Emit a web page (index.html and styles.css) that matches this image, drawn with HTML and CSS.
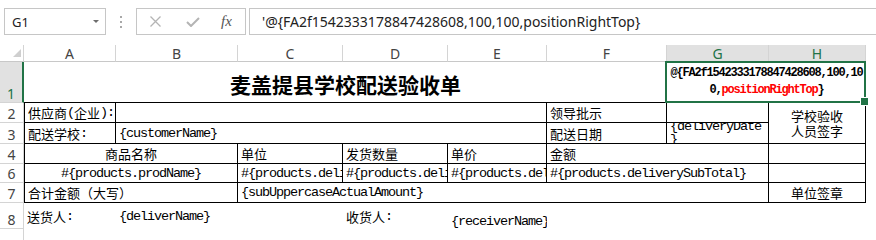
FILE: index.html
```html
<!DOCTYPE html>
<html lang="zh-CN">
<head>
    <meta charset="UTF-8">
    <title>麦盖提县学校配送验收单</title>
    <link rel="stylesheet" href="styles.css">
</head>
<body>
    <div class="app">
        <!-- barra de fórmulas -->
        <div class="formula-bar">
            <div class="name-box"><span>G1</span><span class="caret"></span></div>
            <div class="grip"><i></i><i></i><i></i></div>
            <div class="fx-buttons">
                <svg class="btn-x" width="11" height="11" viewBox="0 0 11 11"><path d="M0.5 0.5 L10.5 10.5 M10.5 0.5 L0.5 10.5" stroke="#b4b4b4" stroke-width="1.3" fill="none"/></svg>
                <svg class="btn-ok" width="14" height="10" viewBox="0 0 14 10"><path d="M1 5 L5 9 L13 1" stroke="#b4b4b4" stroke-width="2" fill="none"/></svg>
                <span class="btn-fx">fx</span>
            </div>
            <div class="formula-input">'@{FA2f1542333178847428608,100,100,positionRightTop}</div>
        </div>

        <!-- hoja -->
        <div class="sheet">
            <div class="corner"><span class="corner-mark"></span></div>
            <div class="col-head">A</div>
            <div class="col-head">B</div>
            <div class="col-head">C</div>
            <div class="col-head">D</div>
            <div class="col-head">E</div>
            <div class="col-head">F</div>
            <div class="col-head sel">G</div>
            <div class="col-head sel">H</div>

            <div class="row-head sel">1</div>
            <div class="cell c6 bb title">麦盖提县学校配送验收单</div>
            <div class="cell c2 bb center active">
                <div class="code-bold">@{FA2f1542333178847428608,100,10<br>0,<span class="red">positionRightTop</span>}</div>
            </div>

            <div class="row-head">2</div>
            <div class="cell b bl">供应商<span class="m">(</span>企业<span class="m">):</span></div>
            <div class="cell c4 b"></div>
            <div class="cell b">领导批示</div>
            <div class="cell b"></div>
            <div class="cell r2 b center stack">学校验收<br>人员签字</div>

            <div class="row-head">3</div>
            <div class="cell b bl">配送学校<span class="m">:</span></div>
            <div class="cell c4 b"><span class="m">{customerName}</span></div>
            <div class="cell b">配送日期</div>
            <div class="cell b top"><div class="wrap m">{deliveryDate<br>}</div></div>

            <div class="row-head">4</div>
            <div class="cell c2 b bl center">商品名称</div>
            <div class="cell b">单位</div>
            <div class="cell b">发货数量</div>
            <div class="cell b">单价</div>
            <div class="cell c2 b">金额</div>
            <div class="cell b"></div>

            <div class="row-head">6</div>
            <div class="cell c2 b bl center"><span class="m">#{products.prodName}</span></div>
            <div class="cell b"><span class="m clip">#{products.deliveryNum}</span></div>
            <div class="cell b"><span class="m clip">#{products.deliveryCount}</span></div>
            <div class="cell b"><span class="m clip">#{products.deliveryPrice}</span></div>
            <div class="cell c2 b"><span class="m">#{products.deliverySubTotal}</span></div>
            <div class="cell b"></div>

            <div class="row-head">7</div>
            <div class="cell c2 b bl">合计金额（大写）</div>
            <div class="cell c5 b"><span class="m">{subUppercaseActualAmount}</span></div>
            <div class="cell b center">单位签章</div>

            <div class="row-head">8</div>
            <div class="cell">送货人<span class="m">:</span></div>
            <div class="cell"><span class="m">{deliverName}</span></div>
            <div class="cell"></div>
            <div class="cell">收货人<span class="m">:</span></div>
            <div class="cell bottom"><span class="m">{receiverName}</span></div>
            <div class="cell c3"></div>

            <div class="row-head"></div>
        </div>
    </div>
</body>
</html>
```

FILE: styles.css
```css
* {
    box-sizing: border-box;
}

body {
    margin: 0;
    background: #fff;
    font-family: 'Noto Sans', sans-serif;
    overflow: hidden;
}

.app {
    width: 876px;
    height: 240px;
    overflow: hidden;
}

/* Barra de fórmulas */
.formula-bar {
    display: flex;
    align-items: center;
    height: 45px;
    padding: 8px 0 10px 4px;
}

.name-box {
    width: 102px;
    height: 27px;
    border: 1px solid #c6c6c6;
    display: flex;
    align-items: center;
    justify-content: space-between;
    padding: 0 6px 0 7px;
    font-size: 13px;
    color: #222;
}

.caret {
    width: 0;
    height: 0;
    border-left: 3px solid transparent;
    border-right: 3px solid transparent;
    border-top: 3px solid #6d6d6d;
}

.grip {
    width: 30px;
    display: flex;
    flex-direction: column;
    align-items: center;
    gap: 3px;
}

.grip i {
    width: 2px;
    height: 2px;
    background: #a8a8a8;
}

.fx-buttons {
    width: 110px;
    height: 27px;
    border: 1px solid #c6c6c6;
    display: flex;
    align-items: center;
    padding-left: 13px;
}

.btn-ok {
    margin-left: 25px;
}

.btn-fx {
    margin-left: 21px;
    font-family: 'Liberation Serif', serif;
    font-style: italic;
    font-size: 15px;
    color: #555;
}

.formula-input {
    flex: 1;
    margin-left: 3px;
    margin-right: -4px;
    height: 27px;
    border: 1px solid #c6c6c6;
    display: flex;
    align-items: center;
    padding-left: 12px;
    font-size: 14px;
    color: #222;
    white-space: nowrap;
}

/* Hoja */
.sheet {
    display: grid;
    grid-template-columns: 24px 92px 122px 105px 105px 99px 120px 102px 97px;
    grid-template-rows: 17px 41px 20px 21px 20px 19px 20px 26px 20px;
}

.corner {
    display: flex;
    justify-content: flex-end;
    align-items: flex-end;
    padding: 0 2px 4px 0;
    border-right: 1px solid #d4d4d4;
    border-bottom: 1px solid #c8c8c8;
}

.corner-mark {
    width: 0;
    height: 0;
    border-left: 8px solid transparent;
    border-bottom: 8px solid #cfcfcf;
}

.col-head {
    display: flex;
    align-items: center;
    justify-content: center;
    font-size: 14px;
    color: #444;
    border-right: 1px solid #d4d4d4;
    border-bottom: 1px solid #c8c8c8;
}

.col-head.sel {
    background: #e1e1e1;
    color: #217346;
}

.row-head {
    display: flex;
    align-items: flex-end;
    justify-content: center;
    font-size: 14px;
    line-height: 17px;
    color: #444;
    border-right: 1px solid #d4d4d4;
    border-bottom: 1px solid #d4d4d4;
}

.row-head.sel {
    background: #e1e1e1;
    color: #217346;
    border-right: 2px solid #217346;
}

.cell {
    display: flex;
    align-items: center;
    padding: 0 3px;
    overflow: hidden;
    white-space: nowrap;
    font-family: 'Noto Sans CJK SC', sans-serif;
    font-size: 13px;
    color: #000;
}

.m {
    font-family: 'Liberation Mono', monospace;
    font-size: 13.5px;
    letter-spacing: -1.1px;
}

/* texto recortado en el borde de la celda */
.clip {
    min-width: 0;
    margin-right: -3px;
    overflow: hidden;
}

.b {
    border-right: 1px solid #000;
    border-bottom: 1px solid #000;
}

.bl {
    border-left: 1px solid #000;
}

.bb {
    border-bottom: 1px solid #000;
}

.c2 { grid-column: span 2; }
.c3 { grid-column: span 3; }
.c4 { grid-column: span 4; }
.c5 { grid-column: span 5; }
.c6 { grid-column: span 6; }
.r2 { grid-row: span 2; }

.center {
    justify-content: center;
    text-align: center;
}

.top {
    align-items: flex-start;
}

.bottom {
    align-items: flex-end;
}

.stack {
    white-space: normal;
    line-height: 15px;
}

.wrap {
    line-height: 13px;
    margin-top: -3px;
}

.title {
    justify-content: center;
    padding-top: 3px;
    font-size: 21px;
    font-weight: bold;
}

/* Celda seleccionada G1:H1 */
.active {
    position: relative;
    overflow: visible;
    white-space: normal;
    z-index: 2;
}

.active::before {
    content: '';
    position: absolute;
    left: -2px;
    right: 0;
    top: -1px;
    bottom: -1px;
    border: 2px solid #217346;
}

.active::after {
    content: '';
    position: absolute;
    right: -3px;
    bottom: -4px;
    width: 7px;
    height: 7px;
    background: #217346;
    border: 1px solid #fff;
}

.code-bold {
    font-family: 'Liberation Mono', monospace;
    font-weight: bold;
    font-size: 12px;
    letter-spacing: -1.2px;
    line-height: 17px;
}

.red {
    color: #f00;
}
```
